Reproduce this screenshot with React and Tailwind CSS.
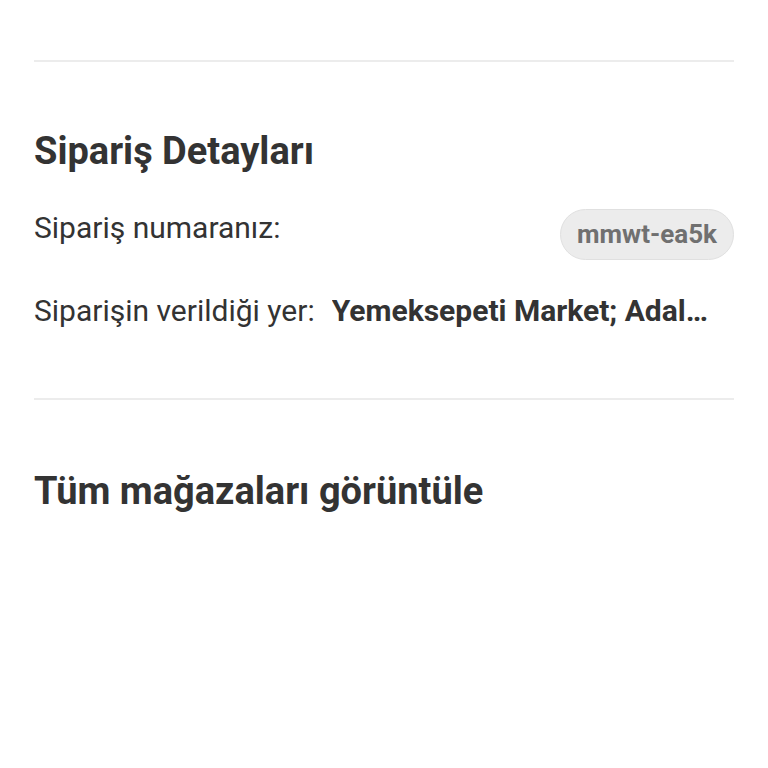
export default function App() {
  return (
    <div className="min-h-[768px] bg-white font-['Roboto',sans-serif] text-[#333333]">
      <div className="px-[34px]">
        <div className="h-[60px]" />
        <div className="border-t-2 border-[#ececec]" />

        <section className="pt-[67px] pb-[69px]">
          <h2 className="text-[38px] font-bold leading-[44px]">Sipariş Detayları</h2>

          <div className="mt-[36px] flex items-start justify-between">
            <span className="pt-[1px] text-[30px] leading-[36px]">Sipariş numaranız:</span>
            <span className="rounded-full border border-[#e0e0e0] bg-[#ececec] px-[16px] py-[9px] text-[26px] font-bold leading-[31px] text-[#707070]">
              mmwt-ea5k
            </span>
          </div>

          <div className="mt-[33px] flex items-baseline gap-[17px] pr-[20px]">
            <span className="shrink-0 text-[30px] leading-[36px]">Siparişin verildiği yer:</span>
            <span className="min-w-0 truncate text-[30px] font-bold leading-[36px]">
              Yemeksepeti Market; Adalar Mahallesi
            </span>
          </div>
        </section>

        <div className="border-t-2 border-[#ececec]" />

        <h2 className="pt-[67px] text-[38px] font-bold leading-[48px]">Tüm mağazaları görüntüle</h2>
      </div>
    </div>
  );
}
